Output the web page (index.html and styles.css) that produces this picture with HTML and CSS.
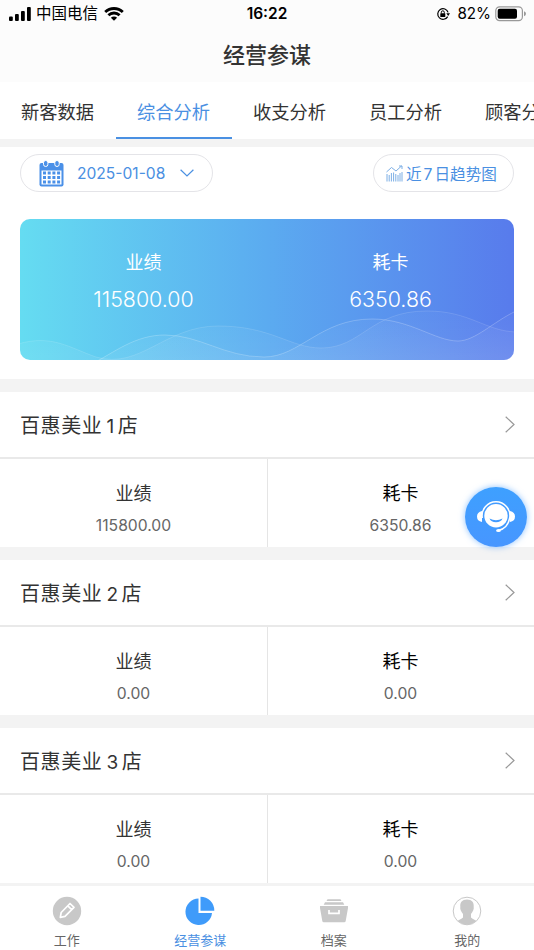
FILE: index.html
```html
<!DOCTYPE html>
<html lang="zh-CN">
<head>
    <meta charset="UTF-8">
    <meta name="viewport" content="width=device-width, initial-scale=1.0">
    <title>经营参谋</title>
    <link rel="stylesheet" href="styles.css">
</head>
<body>
    <header class="header">
        <div class="status">
            <div class="status-left">
                <svg class="signal" width="22" height="14" viewBox="0 0 22 14">
                    <rect x="0" y="9.5" width="3.8" height="4.5" rx="1"/>
                    <rect x="6" y="7" width="3.8" height="7" rx="1"/>
                    <rect x="12" y="4" width="3.8" height="10" rx="1"/>
                    <rect x="18" y="0" width="3.8" height="14" rx="1"/>
                </svg>
                <span class="carrier">中国电信</span>
                <svg class="wifi" width="20" height="14" viewBox="0 0 20 14">
                    <path d="M1.2 5.1a12.6 12.6 0 0 1 17.6 0M4.4 8.3a8 8 0 0 1 11.2 0" fill="none" stroke="#000" stroke-width="2.8"/>
                    <path d="M10 13.8 6.9 10.7a4.4 4.4 0 0 1 6.2 0z"/>
                </svg>
            </div>
            <div class="time">16:22</div>
            <div class="status-right">
                <svg class="lock" width="14" height="14" viewBox="0 0 14 14">
                    <path d="M11.7 9.6A5.3 5.3 0 1 1 12.1 5.4" fill="none" stroke="#000" stroke-width="1.2"/>
                    <path d="M10.3 6.2h3.7L12.2 9z"/>
                    <rect x="4.3" y="6.3" width="5" height="3.8" rx=".5"/>
                    <path d="M5.3 6.5V5.3a1.5 1.5 0 0 1 3 0v1.2" fill="none" stroke="#000"/>
                </svg>
                <span class="percent">82%</span>
                <svg class="battery" width="32" height="16" viewBox="0 0 32 16">
                    <rect x=".8" y=".8" width="26.6" height="13.8" rx="3.8" fill="none" stroke="#999" stroke-width="1.2"/>
                    <rect x="2.7" y="2.7" width="19.3" height="10" rx="2"/>
                    <path d="M29 5.3q2 .8 2 2.5t-2 2.5z" fill="#999"/>
                </svg>
            </div>
        </div>
        <h1 class="title">经营参谋</h1>
    </header>

    <nav class="tabs">
        <a class="tab">新客数据</a>
        <a class="tab active">综合分析</a>
        <a class="tab">收支分析</a>
        <a class="tab">员工分析</a>
        <a class="tab">顾客分析</a>
    </nav>

    <section class="overview">
        <div class="filters">
            <div class="pill date">
                <svg width="25" height="27" viewBox="0 0 25 27">
                    <rect x=".5" y="3" width="24" height="23.5" rx="2" fill="#4a90e8"/>
                    <path d="M2.5 10.5h20v14h-20z" fill="#fff"/>
                    <rect x="4.500" y=".5" width="4.4" height="6" rx="2.2" fill="#4a90e8" stroke="#fff"/>
                    <rect x="15.800" y=".5" width="4.4" height="6" rx="2.2" fill="#4a90e8" stroke="#fff"/>
                    <path d="M4 13h17.400M4 17.500h17.400M4 22h17.400" stroke="#4a90e8" stroke-width="2.8" stroke-dasharray="3 1.700"/>
                </svg>
                <span class="date-text">2025-01-08</span>
                <svg width="14" height="8" viewBox="0 0 14 8">
                    <path d="M.6.7 7 7 13.4.7" fill="none" stroke="#4a90e2" stroke-width="1.2"/>
                </svg>
            </div>
            <div class="pill trend">
                <svg width="17" height="17" viewBox="0 0 17 17" fill="none" stroke="#6da5e2">
                    <path d="M1 16.5V9M3.2 16.5V10M5.4 16.5V8M7.6 16.5V7.500M9.800 16.500V9M12 16.500V10M14 16.500V8M16 16.500V7" stroke-width=".9"/>
                    <path d="M.5 7 5.500 2.500l4.500 3.500 5.500-5M13 1h3v3" stroke-width=".9"/>
                </svg>
                <span>近<i>7</i>日趋势图</span>
            </div>
        </div>

        <div class="card">
            <svg class="waves" width="494" height="141" viewBox="0 0 494 141">
                <defs>
                    <linearGradient id="wave" x1="0" y1="0" x2="0" y2="1">
                        <stop offset="0" stop-color="#fff" stop-opacity=".03"/>
                        <stop offset="1" stop-color="#fff" stop-opacity=".08"/>
                    </linearGradient>
                </defs>
                <path d="M-2 121C32 111 50 125 76 134C120 147 145 103 198 103C252 103 270 125 301 125C342 125 350 88 407 88C450 88 465 108 496 109V143H-2z" fill="url(#wave)" stroke="#fff" stroke-opacity=".13"/>
                <path d="M70 142C95 129 115 112 145 112C180 112 204 134 244 134C280 134 300 96 352 96C390 96 415 118 438 118C455 118 473 99 496 88V143H70z" fill="url(#wave)" stroke="#fff" stroke-opacity=".22"/>
            </svg>
            <div class="card-item">
                <div class="card-label">业绩</div>
                <div class="card-value">115800.00</div>
            </div>
            <div class="card-item">
                <div class="card-label">耗卡</div>
                <div class="card-value">6350.86</div>
            </div>
        </div>
    </section>

    <main class="stores">
        <section class="store">
            <div class="store-head">
                <h2>百惠美业<i>1</i>店</h2>
                <svg width="10" height="17" viewBox="0 0 10 17"><path d="m.7.800 8.300 7.700-8.300 7.700"/></svg>
            </div>
            <div class="store-body">
                <div class="metric"><span class="label">业绩</span><span class="value">115800.00</span></div>
                <div class="metric dark"><span class="label">耗卡</span><span class="value">6350.86</span></div>
            </div>
        </section>
        <section class="store">
            <div class="store-head">
                <h2>百惠美业<i>2</i>店</h2>
                <svg width="10" height="17" viewBox="0 0 10 17"><path d="m.7.800 8.300 7.700-8.300 7.700"/></svg>
            </div>
            <div class="store-body">
                <div class="metric"><span class="label">业绩</span><span class="value">0.00</span></div>
                <div class="metric dark"><span class="label">耗卡</span><span class="value">0.00</span></div>
            </div>
        </section>
        <section class="store">
            <div class="store-head">
                <h2>百惠美业<i>3</i>店</h2>
                <svg width="10" height="17" viewBox="0 0 10 17"><path d="m.7.800 8.300 7.700-8.300 7.700"/></svg>
            </div>
            <div class="store-body">
                <div class="metric"><span class="label">业绩</span><span class="value">0.00</span></div>
                <div class="metric dark"><span class="label">耗卡</span><span class="value">0.00</span></div>
            </div>
        </section>
    </main>

    <!-- 在线客服 -->
    <div class="service">
        <svg width="40" height="34" viewBox="0 0 40 34">
            <path d="M6 11Q1 12 1 16.500t5 5.500zM34 11q5 1 5 5.500t-5 5.500z" fill="#fff"/>
            <circle cx="20" cy="15.800" r="14" fill="#429bff"/>
            <path d="M6.300 18A13.900 13.900 0 1 1 33.700 18C32.500 24.500 28.500 29 23 30.300" fill="none" stroke="#fff" stroke-width="1.500"/>
            <circle cx="20" cy="15.800" r="11.700" fill="#fff"/>
            <ellipse cx="22.500" cy="30.500" rx="2.400" ry="1.500" fill="#fff"/>
            <path d="M13.500 18.500q6.500 3.500 13 0-1.500 3.800-6.500 3.800t-6.500-3.800z" fill="#429bff"/>
        </svg>
    </div>

    <footer class="tabbar">
        <a class="nav">
            <svg width="30" height="30" viewBox="0 0 30 30">
                <circle cx="15" cy="15" r="14.200" fill="#c8c8c8"/>
                <path d="M8.300 21.300 9.200 16.500 18 7.500 22 11.300 13 20.300zM15.800 9.800l3.900 3.800" fill="none" stroke="#fff" stroke-width="1.700" stroke-linejoin="round"/>
            </svg>
            <span>工作</span>
        </a>
        <a class="nav active">
            <svg width="30" height="30" viewBox="0 0 30 30" fill="#3f9bfa">
                <path d="M13.500 2.500V17H27A13.300 13.300 0 1 1 13.500 2.500z"/>
                <path d="M15.500.700A13.800 13.800 0 0 1 29.300 14.700H15.500z"/>
            </svg>
            <span>经营参谋</span>
        </a>
        <a class="nav">
            <svg width="30" height="30" viewBox="0 0 30 30" fill="#c8c8c8">
                <path d="M8.500 3.300h13l1 1.700h-15zM6 6.200h18l1.300 2.600H4.700zM1 10h28v2l-2.300 13q-.2 1.300-1.500 1.300H4.800q-1.300 0-1.500-1.300L1 12z"/>
                <path d="M10 14v3.300h10V14" fill="none" stroke="#fff" stroke-width="1.700"/>
            </svg>
            <span>档案</span>
        </a>
        <a class="nav">
            <svg width="30" height="30" viewBox="0 0 30 30">
                <circle cx="15" cy="15" r="13.800" fill="#fff" stroke="#c8c8c8"/>
                <path d="M15 3.600c5 0 7 3 6.700 7 .5 3-1 5.500-2.700 7.400v3.500c1.500 1.500 3.600 2 5.200 3.200-5 5.300-13.400 5.300-18.400 0 1.600-1.200 3.700-1.700 5.200-3.200V18c-1.700-1.900-3.200-4.400-2.700-7.400-.3-4 1.700-7 6.700-7z" fill="#c8c8c8"/>
            </svg>
            <span>我的</span>
        </a>
    </footer>
</body>
</html>
```
FILE: styles.css
```css
* {
    margin: 0;
    padding: 0;
    box-sizing: border-box;
}

body {
    height: 950px;
    display: flex;
    flex-direction: column;
    overflow: hidden;
    background: #fff;
    color: #333;
    font-family: Inter, 'Noto Sans CJK SC', sans-serif;
}

svg {
    display: block;
    flex-shrink: 0;
}

i {
    font-style: normal;
}

.header {
    height: 82px;
    flex-shrink: 0;
    background: #fcfcfc;
}

.status {
    height: 27px;
    display: grid;
    grid-template-columns: 1fr auto 1fr;
    align-items: center;
    padding: 0 7px 0 9px;
    color: #000;
}

.status-left,
.status-right {
    display: flex;
    align-items: center;
}

.status-left {
    line-height: 20px;
}

.status-right {
    justify-content: flex-end;
}

.carrier {
    margin: 0 6px 0 5px;
    font-size: 15.5px;
}

.time {
    padding-right: 2px;
    font-size: 15.5px;
    font-weight: 600;
}

.percent {
    margin: 0 4px 0 7px;
    font-size: 15.2px;
}

.title {
    height: 55px;
    line-height: 56px;
    text-align: center;
    font-size: 22px;
    font-weight: 500;
}

.tabs {
    height: 65px;
    flex-shrink: 0;
    display: flex;
    overflow: hidden;
    border-bottom: 8px solid #f3f3f3;
}

.tab {
    width: 116px;
    flex-shrink: 0;
    padding-right: 1px;
    text-align: center;
    font-size: 18.3px;
    line-height: 60px;
}

.tab.active {
    height: 57px;
    color: #4a90e2;
    border-bottom: 2px solid #4a90e2;
}

.overview {
    height: 245px;
    flex-shrink: 0;
    padding: 7px 20px 0;
    border-bottom: 13px solid #f3f3f3;
}

.filters {
    display: flex;
    justify-content: space-between;
}

.pill {
    height: 38px;
    display: flex;
    align-items: center;
    border: 1px solid #e4e4e8;
    border-radius: 19px;
    color: #4a90e2;
    font-size: 15.6px;
}

.date {
    width: 193px;
    padding-left: 18px;
}

.date-text {
    width: 89px;
    margin: 0 14px 0 13px;
    white-space: nowrap;
}

.trend {
    width: 141px;
    gap: 3px;
    padding-left: 12px;
    white-space: nowrap;
}

.trend i {
    margin: 0 2px;
}

.card {
    position: relative;
    height: 141px;
    display: flex;
    margin-top: 27px;
    overflow: hidden;
    border-radius: 10px;
    background: linear-gradient(90deg, #65dcf1, #5babf0 50%, #587bec);
    color: #fff;
    text-align: center;
}

.waves {
    position: absolute;
    left: 0;
    top: 4px;
}

.card-item {
    flex: 1;
    padding-top: 30px;
}

.card-label {
    font-size: 18px;
    line-height: 28px;
}

.card-value {
    margin-top: 6px;
    font-size: 21.4px;
    font-weight: 300;
    line-height: 32px;
}

.stores {
    height: 491px;
    flex-shrink: 0;
    overflow: hidden;
}

.store {
    height: 168px;
    border-bottom: 13px solid #f3f3f3;
}

.store-head {
    height: 67px;
    display: flex;
    align-items: center;
    justify-content: space-between;
    padding: 0 19px 0 20px;
    border-bottom: 2px solid #e9e9e9;
}

.store-head h2 {
    font-size: 20px;
    font-weight: 400;
    letter-spacing: .6px;
}

.store-head i {
    margin: 0 3px 0 4px;
    font-size: 19px;
}

.store-head path {
    fill: none;
    stroke: #999;
    stroke-width: 1.2;
}

.store-body {
    height: 88px;
    display: grid;
    grid-template-columns: 1fr 1fr;
}

.metric {
    display: flex;
    flex-direction: column;
    align-items: center;
    padding-top: 21px;
}

.metric + .metric {
    padding-right: 1px;
    border-left: 1px solid #e5e5e5;
}

.label {
    font-size: 18px;
    line-height: 28px;
}

.dark .label {
    color: #000;
}

.value {
    margin-top: 6px;
    color: #666;
    font-size: 15.7px;
    line-height: 24px;
}

.service {
    position: absolute;
    left: 465px;
    top: 487px;
    width: 62px;
    height: 60px;
    display: flex;
    align-items: center;
    justify-content: center;
    border-radius: 50%;
    background: linear-gradient(#3ea0ff, #4796ff);
    box-shadow: 0 0 6px rgba(66, 155, 255, .6);
}

.tabbar {
    height: 67px;
    flex-shrink: 0;
    display: grid;
    grid-template-columns: repeat(4, 1fr);
    border-top: 3px solid #f3f3f3;
}

.nav {
    display: flex;
    flex-direction: column;
    align-items: center;
    padding-top: 10px;
    color: #666;
    font-size: 13px;
    line-height: 28px;
}

.nav.active {
    color: #4a90e2;
}
```
